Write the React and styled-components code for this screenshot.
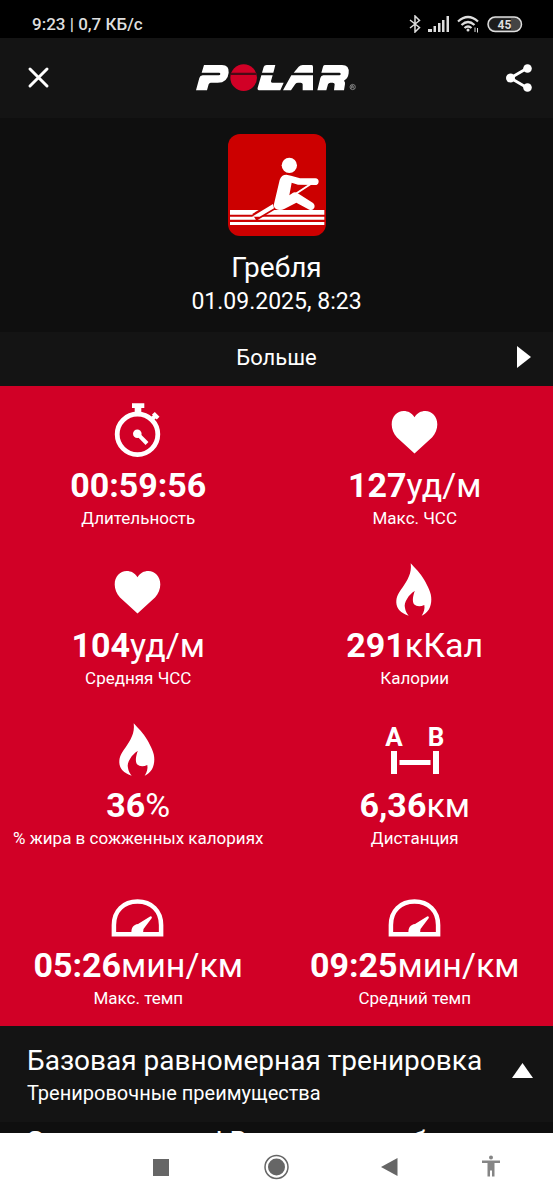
import React from "react";
import styled, { createGlobalStyle } from "styled-components";

const GlobalStyle = createGlobalStyle`
  * {
    box-sizing: border-box;
  }

  body {
    margin: 0;
    background: #000;
    color: #fff;
    font-family: Roboto, "Noto Sans", sans-serif;
  }

  button {
    padding: 0;
    border: 0;
    background: none;
    color: inherit;
    font: inherit;
    cursor: pointer;
  }

  svg {
    display: block;
  }

  h1, h2, p, dl, dt, dd {
    margin: 0;
    font-weight: 400;
  }
`;

const Screen = styled.div`
  display: flex;
  flex-direction: column;
  height: 100vh;
`;

const StatusBar = styled.div`
  display: flex;
  flex: none;
  align-items: center;
  justify-content: space-between;
  height: 38px;
  padding: 10px 30px 0 32px;
  background: #000;
  color: #dedede;
  font-size: 17px;
  font-weight: 500;
`;

const StatusIcons = styled.div`
  display: flex;
  align-items: center;
  gap: 7px;
`;

const Header = styled.header`
  display: grid;
  flex: none;
  grid-template-columns: 28px 1fr 28px;
  align-items: center;
  justify-items: center;
  height: 80px;
  padding: 0 20px 0 24px;
  background: #141414;

  > svg {
    margin-right: 5px;
  }
`;

const Content = styled.main`
  flex: 1;
  min-height: 0;
  overflow-y: auto;
  scrollbar-width: none;
  background: #0f0f0f;
`;

const Sport = styled.section`
  display: flex;
  flex-direction: column;
  align-items: center;
  padding: 16px 16px 14px;

  h1 {
    margin-top: 14px;
    font-size: 28px;
    line-height: 36px;
  }

  p {
    font-size: 23px;
    line-height: 32px;
  }
`;

const MoreButton = styled.button`
  && {
    display: grid;
    grid-template-columns: 20px 1fr 20px;
    align-items: center;
    width: 100%;
    height: 54px;
    padding: 0 19px 4px;
    background: #141414;
    font-size: 22px;
  }

  svg {
    justify-self: center;
  }
`;

const Stats = styled.dl`
  display: grid;
  grid-template-columns: 1fr 1fr;
  background: #d10026;
`;

const StatCell = styled.div`
  display: flex;
  flex-direction: column;
  align-items: center;
  padding: 13px 0 17px;
  text-align: center;
  white-space: nowrap;

  dd {
    margin: 6px 0 2px;
    font-size: 34px;
    line-height: 40px;
  }

  dt {
    order: 1;
    font-size: 17px;
    line-height: 22px;
  }
`;

const Benefit = styled.button`
  && {
    display: flex;
    align-items: center;
    justify-content: space-between;
    width: 100%;
    padding: 17px 20px 15px 27px;
    background: #141414;
    text-align: left;
  }

  h2 {
    font-size: 28px;
    line-height: 36px;
  }

  p {
    font-size: 20px;
    line-height: 28px;
  }

  svg {
    margin-bottom: 10px;
  }
`;

const BenefitText = styled.p`
  padding: 2px 27px;
  font-size: 28px;
  line-height: 36px;
`;

const NavBar = styled.nav`
  display: grid;
  flex: none;
  grid-template-columns: 1fr 115px 115px 115px 1fr;
  align-items: center;
  justify-items: center;
  height: 67px;
  background: #fff;
  color: #666;
`;

const NavButton = styled.button`
  && {
    grid-column: ${props => props.$column};
    margin-right: ${props => (props.$column === 5 ? "20px" : "0")};
    color: ${props => (props.$column === 5 ? "#858585" : "inherit")};
  }
`;

const PolarLogo = () => (
  <svg width="162" height="28" viewBox="57 42 486 84" role="img" aria-label="Polar">
    <g fill="#fff">
      <path d="M84 45H138Q160 45 158 68Q155 98 125 98H104Q100 98 98 103L93 121H60L70 84Q72 76 80 76H128Q133 76 133 72Q133 68 129 68H77Z" />
      <path d="M272 45H298L292 68H258L263 51Q265 45 272 45Z" />
      <path d="M256 76H290L285 93Q284 98 289 98H323L313 121H252Q243 121 245 113Z" />
      <path d="M353 68L368 50Q373 45 380 45H407Q411 45 411 50V68Z" />
      <path d="M346 76H411V121H380V103Q380 98 374 98H366Q361 98 358 102L345 121H321Z" />
      <path d="M446 45H498Q521 45 518 70Q516 86 504 92Q508 96 507 102L504 121H474L476 103Q476 98 470 98H463Q458 98 456 103L451 121H424L433 84Q435 76 442 76H490Q494 76 494 72Q494 68 490 68H436L441 50Q442 45 446 45Z" />
    </g>
    <circle cx="203" cy="83" r="40" fill="#d10026" />
    <path d="M165 68H241V75H163Z" fill="#4a0a16" />
    <circle cx="530" cy="111" r="8" fill="none" stroke="#aaa" strokeWidth="2" />
    <path d="M527 116V107H531Q534 109 531 111H527M531 111L534 116" fill="none" stroke="#aaa" strokeWidth="2" />
  </svg>
);

const RowingIcon = () => (
  <svg width="98" height="102" viewBox="33 27 294 306" aria-hidden="true">
    <rect x="33" y="27" width="294" height="306" rx="36" fill="#c00" />
    <g fill="#fff">
      <path d="M39 255H322V269H39Z" />
      <path d="M39 275H322V284H39Z" />
    </g>
    <path d="M172 241L112 277" stroke="#c00" strokeWidth="24" />
    <path d="M39 291H322V300H39Z" fill="#fff" />
    <path d="M105 275L168 237L171 250L128 275Z" fill="#fff" />
    <path d="M295 168L180 243" stroke="#fff" strokeWidth="6" />
    <circle cx="217" cy="121" r="23" fill="#fff" />
    <path
      d="M188 165Q193 149 208 149L222 152L249 160H295Q305 161 305 170Q304 180 294 180L243 179L224 173L217 211L228 203Q234 200 241 204L287 233Q295 239 292 248Q287 258 277 254L238 233L203 251Q189 259 177 252Q169 247 171 237Z"
      fill="#fff"
    />
  </svg>
);

const CloseIcon = () => (
  <svg width="28" height="28" viewBox="0 0 28 28" fill="none" stroke="#fff" strokeWidth="3" strokeLinecap="round">
    <path d="M6 5L23 22M23 5L6 22" />
  </svg>
);

const ShareIcon = () => (
  <svg width="28" height="28" viewBox="0 0 28 28" fill="#fff">
    <path d="M22.500 4L5.500 14L22.500 24" fill="none" stroke="#fff" strokeWidth="2.800" />
    <circle cx="22.500" cy="4.500" r="4.300" />
    <circle cx="5.500" cy="14" r="4.500" />
    <circle cx="22.500" cy="23.500" r="4.300" />
  </svg>
);

const BluetoothIcon = () => (
  <svg width="12" height="18" viewBox="0 0 12 18" fill="none" stroke="currentColor" strokeWidth="1.500">
    <path d="M1 5L10.500 12.500L6 17V1L10.500 5.500L1 13" />
  </svg>
);

const SignalIcon = () => (
  <svg width="22" height="16" viewBox="0 0 22 16" fill="currentColor">
    <path d="M0 13h4v3H0zM5.500 10h2.500v6H5.500zM10 7h2.500v9H10zM14 4h2.500v12H14zM18.500 0h2.500v16h-2.500z" />
  </svg>
);

const WifiIcon = () => (
  <svg width="23" height="18" viewBox="0 0 23 18" fill="none" stroke="currentColor" strokeWidth="2.200">
    <path d="M1 6.500Q11 -2.500 21 6.500M4.500 10Q11 4 17.500 10M7.500 13Q11 10 14.500 13" />
    <circle cx="11" cy="15" r="1.500" fill="currentColor" stroke="none" />
    <path d="M18 12.500v4.500M20.500 13v4.500" strokeWidth="1" />
  </svg>
);

const BatteryIcon = () => (
  <svg width="36" height="17" viewBox="0 0 36 17" role="img" aria-label="45%">
    <rect x="1" y="1" width="33.500" height="14.500" rx="7.200" fill="#444" stroke="#dedede" strokeWidth="1.500" />
    <path d="M8 2.500H24V14H8A5.700 5.700 0 0 1 8 2.500Z" fill="#1c1c1c" />
    <text x="17.500" y="12.500" fill="#dedede" fontFamily="Roboto" fontSize="12" fontWeight="700" textAnchor="middle">
      45
    </text>
  </svg>
);

const Stopwatch = () => (
  <>
    <path d="M24 4.300H36.300V9H33.300V13H26.700V9H24Z" />
    <path d="M44 15.500L46.800 13L51.500 17.700L48.800 20.500L47.600 19.400L45.300 21.500L42.300 18.500L44.800 16.500Z" />
    <circle cx="29.500" cy="35.300" r="20.300" fill="none" stroke="#fff" strokeWidth="4.800" />
    <circle cx="29.300" cy="34.700" r="4.300" />
    <path d="M29.300 34.700L39 44.500" stroke="#fff" strokeWidth="4" />
  </>
);

const Heart = () => (
  <path d="M29.500 54.500L12 38.500C8.500 34.500 6.700 30 6.700 25.500C6.700 17.500 12 12 18.700 12C23 12 27 14 29.500 18.300C32 14 36 12 40.300 12C47 12 52.300 17.500 52.300 25.500C52.300 30 50.500 34.500 47 38.500Z" />
);

const Flame = () => (
  <path d="M25.700 4.300C30 9 35.500 14.500 39 20.500C43 27.500 46.500 34 46.300 40.500C46.300 48 43 54 36.700 56.700C39 53 40 49.500 39.300 46C35 48 31.500 47.500 29 45.300C27 42 28 37 29.700 32C26.500 34 24 36.500 22.300 39.500C20 43 19.200 46 20 49C20.500 52 21.800 54.500 23.700 56.700C16.500 54.500 11.500 50 11.300 43.500C11.200 37 14 33.500 17.500 28.500C22.500 21 27 14.500 25.700 4.300Z" />
);

const Distance = () => (
  <>
    <g fontFamily="Roboto" fontSize="26" fontWeight="700" textAnchor="middle">
      <text x="9" y="27">A</text>
      <text x="51" y="27">B</text>
    </g>
    <path d="M6 32H12V55H6ZM48 32H54V55H48ZM14.500 41H45.500V46H14.500Z" />
  </>
);

const Gauge = () => (
  <>
    <path d="M5.900 55.200V46C5.900 32 15.500 22.500 29.500 22.500S53.100 32 53.100 46V55.200Z" fill="none" stroke="#fff" strokeWidth="4.500" />
    <path d="M23.500 54C23 49 25.500 45.500 30 45L42.500 37.300Q44.500 37.500 43.800 39L35.500 50L35 54Z" />
  </>
);

const stats = [
  { icon: Stopwatch, value: "00:59:56", unit: "", label: "Длительность" },
  { icon: Heart, value: "127", unit: "уд/м", label: "Макс. ЧСС" },
  { icon: Heart, value: "104", unit: "уд/м", label: "Средняя ЧСС" },
  { icon: Flame, value: "291", unit: "кКал", label: "Калории" },
  { icon: Flame, value: "36", unit: "%", label: "% жира в сожженных калориях" },
  { icon: Distance, value: "6,36", unit: "км", label: "Дистанция" },
  { icon: Gauge, value: "05:26", unit: "мин/км", label: "Макс. темп" },
  { icon: Gauge, value: "09:25", unit: "мин/км", label: "Средний темп" }
];

const Stat = props => {
  const Icon = props.icon;

  return (
    <StatCell>
      <svg width="60" height="60" viewBox="0 0 60 60" fill="#fff" aria-hidden="true">
        <Icon />
      </svg>
      <dt>{props.label}</dt>
      <dd>
        <b>{props.value}</b>
        {props.unit}
      </dd>
    </StatCell>
  );
};

const App = () => (
  <Screen>
    <GlobalStyle />
    <StatusBar>
      <span>9:23 | 0,7 КБ/с</span>
      <StatusIcons>
        <BluetoothIcon />
        <SignalIcon />
        <WifiIcon />
        <BatteryIcon />
      </StatusIcons>
    </StatusBar>
    <Header>
      <button aria-label="Закрыть">
        <CloseIcon />
      </button>
      <PolarLogo />
      <button aria-label="Поделиться">
        <ShareIcon />
      </button>
    </Header>
    <Content>
      <Sport>
        <RowingIcon />
        <h1>Гребля</h1>
        <p>01.09.2025, 8:23</p>
      </Sport>
      <MoreButton>
        <span />
        <span>Больше</span>
        <svg width="14" height="22" viewBox="0 0 14 22" fill="#fff">
          <path d="M0 0L14 11L0 22Z" />
        </svg>
      </MoreButton>
      <Stats>
        {stats.map(stat => (
          <Stat key={stat.label} {...stat} />
        ))}
      </Stats>
      <Benefit aria-expanded="true">
        <div>
          <h2>Базовая равномерная тренировка</h2>
          <p>Тренировочные преимущества</p>
        </div>
        <svg width="21" height="15" viewBox="0 0 21 15" fill="#fff">
          <path d="M10.500 0L21 15H0Z" />
        </svg>
      </Benefit>
      <BenefitText>
        Замечательно! Вы улучшили базовую выносливость.
      </BenefitText>
    </Content>
    <NavBar>
      <NavButton $column={2} aria-label="Недавние">
        <svg width="24" height="24" viewBox="0 0 24 24" fill="currentColor">
          <rect x="3" y="4" width="16" height="17" />
        </svg>
      </NavButton>
      <NavButton $column={3} aria-label="Домой">
        <svg width="26" height="26" viewBox="0 0 26 26" fill="currentColor">
          <circle cx="12.500" cy="13" r="11.500" fill="none" stroke="currentColor" strokeWidth="1.500" />
          <circle cx="12.500" cy="13" r="8.500" />
        </svg>
      </NavButton>
      <NavButton $column={4} aria-label="Назад">
        <svg width="24" height="24" viewBox="0 0 24 24" fill="currentColor">
          <path d="M1 12L17.500 3V21Z" />
        </svg>
      </NavButton>
      <NavButton $column={5} aria-label="Специальные возможности">
        <svg width="24" height="24" viewBox="0 0 24 24" fill="currentColor">
          <circle cx="12" cy="2.500" r="2" />
          <path d="M3 5.500H21V8H15.500V21.500H13V15.500H11V21.500H8.500V8H3Z" />
        </svg>
      </NavButton>
    </NavBar>
  </Screen>
);

export default App;
